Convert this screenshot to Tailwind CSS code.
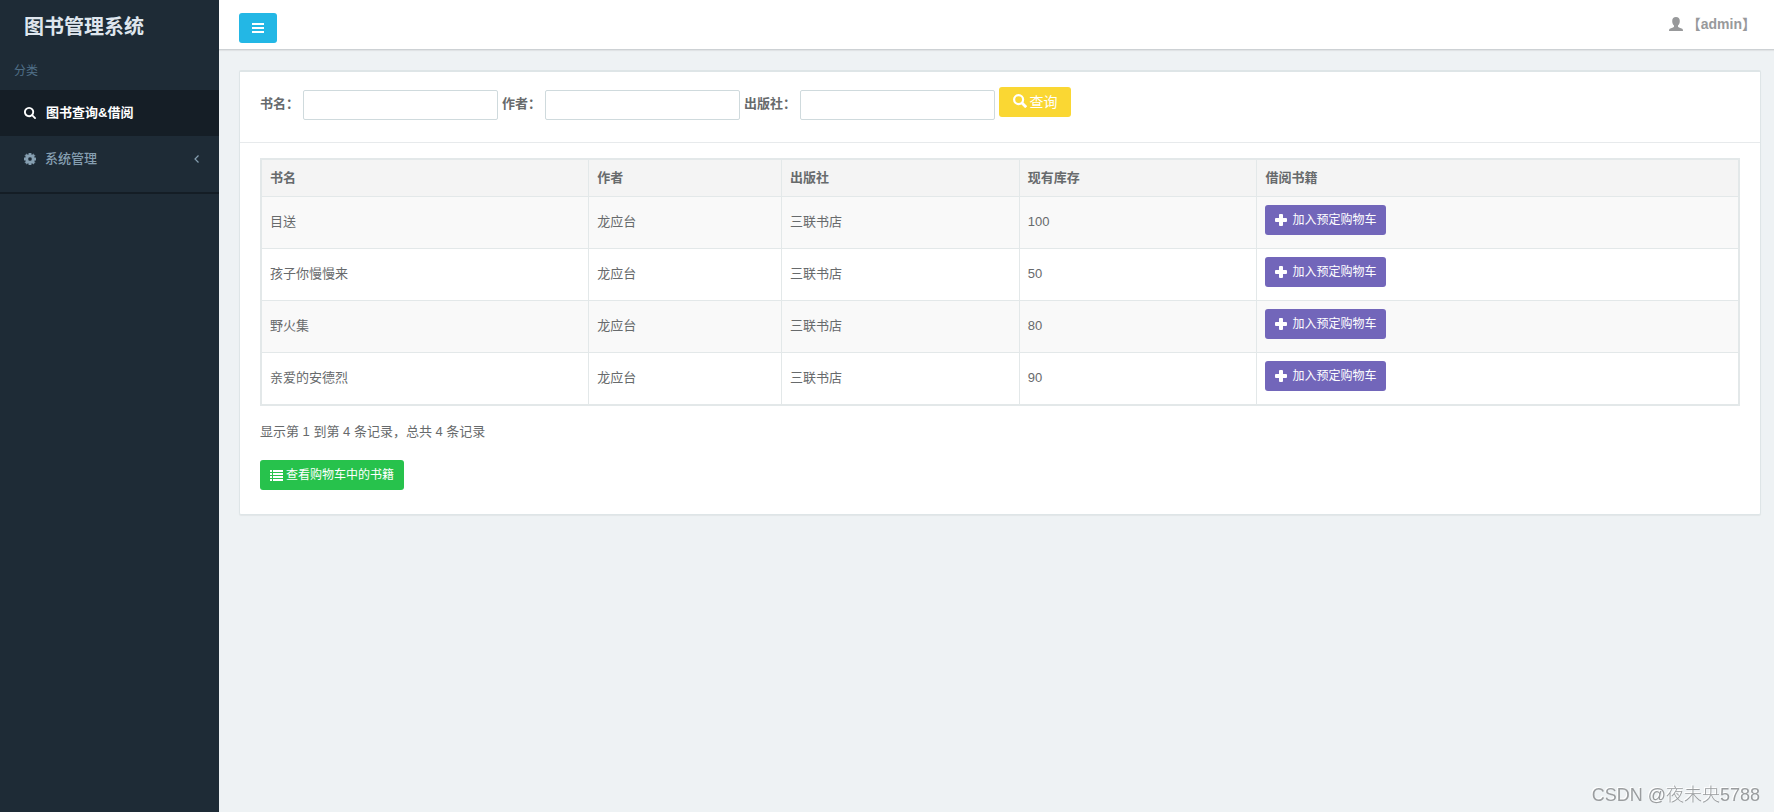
<!DOCTYPE html>
<html lang="zh-CN">
<head>
<meta charset="utf-8">
<meta name="viewport" content="width=device-width, initial-scale=1">
<title>图书管理系统</title>
<script src="https://cdn.jsdelivr.net/npm/@tailwindcss/browser@4"></script>
</head>
<body class="flex min-h-screen bg-[#eef2f4] font-['Liberation_Sans','Noto_Sans_CJK_SC',sans-serif] text-[13px] leading-5 text-[#676a6c]">
<svg class="hidden" aria-hidden="true">
  <symbol id="plus" viewBox="0 0 12 12"><path d="M4.900 0h2.200q.9 0 .9.9V4h3.100q.9 0 .9.9v2.200q0 .9-.9.9H8v3.100q0 .9-.9.9H4.900q-.9 0-.9-.9V8H.9Q0 8 0 7.100V4.900Q0 4 .9 4H4V.9Q4 0 4.900 0z"/></symbol>
</svg>

<aside class="w-[219px] shrink-0 bg-[#1e2b36]">
  <h1 class="px-6 pt-[13px] text-xl leading-7 font-bold text-[#dfe6ee]">图书管理系统</h1>
  <nav class="border-b-2 border-[#141d25] pt-5 pb-5">
    <p class="px-[14px] pb-[9px] text-xs leading-5 text-[#506f87]">分类</p>
    <a href="#" class="flex h-[46px] items-center gap-[10px] bg-[#151e26] px-6 pb-px font-bold text-white">
      <svg class="size-3" viewBox="0 0 1664 1664" fill="currentColor"><path d="M1152 704q0-185-131.500-316.500t-316.500-131.500-316.500 131.500-131.500 316.500 131.500 316.500 316.500 131.500 316.500-131.500 131.500-316.500zm512 832q0 52-38 90t-90 38q-54 0-90-38l-343-342q-179 124-399 124-143 0-273.500-55.500t-225-150-150-225-55.500-273.500 55.500-273.500 150-225 225-150 273.500-55.500 273.500 55.500 225 150 150 225 55.500 273.500q0 220-124 399l343 343q37 37 37 90z"/></svg>
      <span>图书查询&amp;借阅</span>
    </a>
    <a href="#" class="-mb-[10px] flex h-[46px] items-center gap-[9px] px-6 pb-px font-medium text-[#869fb1]">
      <svg class="size-3" viewBox="128 128 1536 1536" fill="currentColor" stroke="currentColor" stroke-width="60"><path d="M1152 896q0-106-75-181t-181-75-181 75-75 181 75 181 181 75 181-75 75-181zm512-109v222q0 12-8 23t-20 13l-185 28q-19 54-39 91 35 50 107 138 10 12 10 25t-9 23q-27 37-99 108t-94 71q-12 0-26-9l-138-108q-44 23-91 38-16 136-29 186-7 28-36 28h-222q-14 0-24.500-8.500t-11.500-21.500l-28-184q-49-16-90-37l-141 107q-10 9-25 9-14 0-25-11-126-114-165-168-7-10-7-23 0-12 8-23 15-21 51-66.500t54-70.500q-27-50-41-99l-183-27q-13-2-21-12.500t-8-23.500v-222q0-12 8-23t19-13l186-28q14-46 39-92-40-57-107-138-10-12-10-24 0-10 9-23 26-36 98.500-107.500t94.500-71.500q13 0 26 10l138 107q44-23 91-38 16-136 29-186 7-28 36-28h222q14 0 24.500 8.500t11.500 21.500l28 184q49 16 90 37l142-107q9-9 24-9 13 0 25 10 129 119 165 170 7 8 7 22 0 12-8 23-15 21-51 66.500t-54 70.500q26 50 41 98l183 28q13 2 21 12.500t8 23.500z"/></svg>
      <span>系统管理</span>
      <svg class="-mr-1 ml-auto h-2 w-[5px]" viewBox="0 0 5 8" fill="none" stroke="currentColor" stroke-width="1.200"><path d="M4.500.5 1 4l3.500 3.500"/></svg>
    </a>
  </nav>
</aside>

<div class="min-w-0 grow">
  <header class="flex h-[50px] items-start justify-between border-b border-[#cdd1d4] bg-white pr-[18px] pl-5 shadow-[0_1px_1px_rgba(0,0,0,0.060)]">
    <button type="button" aria-label="菜单" class="mt-[13px] flex h-[30px] w-[38px] items-center justify-center rounded-[3px] bg-[#23b7e5] text-white">
      <svg class="h-[10px] w-3" viewBox="0 0 12 10" fill="currentColor"><path d="M0 0h12v2H0zM0 4h12v2H0zM0 8h12v2H0z"/></svg>
    </button>
    <a href="#" class="mt-[14px] flex items-center gap-1 text-sm leading-5 font-bold text-[#98999b]">
      <svg class="h-[14px] w-[14px]" viewBox="0 0 14 14" fill="currentColor"><path d="M7 0C4.600 0 3.200 1.500 3.200 3.900c0 2 .7 3.700 1.800 4.700v1.100c-.2.500-.8.700-1.600 1L1.400 11.500C.4 11.900 0 12.600 0 14h14c0-1.400-.4-2.100-1.400-2.500l-2-.8c-.8-.3-1.400-.5-1.600-1V8.600c1.100-1 1.800-2.700 1.800-4.700C10.800 1.500 9.400 0 7 0z"/></svg>
      <span>【admin】</span>
    </a>
  </header>

  <main class="pt-5 pr-[13px] pl-5">
    <section class="rounded-[2px] border border-t-2 border-[#dee5e7] bg-white shadow-[0_1px_1px_rgba(0,0,0,0.050)]">
      <form class="flex items-start gap-1 border-b border-[#e7eaec] px-5 pt-[15px] pb-[22px]">
        <label for="name" class="mt-[7px] font-bold">书名：</label>
        <input id="name" type="text" class="mt-[3px] h-[30px] w-[195px] rounded-[2px] border border-[#cfdadd] bg-white px-2">
        <label for="author" class="mt-[7px] font-bold">作者：</label>
        <input id="author" type="text" class="mt-[3px] h-[30px] w-[195px] rounded-[2px] border border-[#cfdadd] bg-white px-2">
        <label for="press" class="mt-[7px] font-bold">出版社：</label>
        <input id="press" type="text" class="mt-[3px] h-[30px] w-[195px] rounded-[2px] border border-[#cfdadd] bg-white px-2">
        <button type="button" class="flex h-[30px] w-[72px] items-center justify-center gap-[3px] rounded-[3px] bg-[#fad733] text-sm text-white">
          <svg class="mb-[2px] size-[14px]" viewBox="0 0 14 14" fill="none" stroke="currentColor"><circle cx="5.600" cy="5.600" r="4.500" stroke-width="2.200"/><path d="m9 9 4.200 4.200" stroke-width="2.800"/></svg>
          <span>查询</span>
        </button>
      </form>

      <div class="px-5 pt-[15px] pb-6">
        <div class="border border-[#e3e8e9]">
          <table class="w-full table-fixed border-collapse border border-[#e3e8e9] text-left [&_td]:border [&_td]:border-[#e3e8e9] [&_td]:px-2 [&_td]:pt-2 [&_td]:pb-[10px] [&_th]:border [&_th]:border-[#e3e8e9] [&_th]:px-2">
            <colgroup><col class="w-[22.150%]"><col class="w-[13.050%]"><col class="w-[16.100%]"><col class="w-[16.100%]"><col></colgroup>
            <thead><tr class="h-[37px] bg-[#f4f4f4]"><th scope="col">书名</th><th scope="col">作者</th><th scope="col">出版社</th><th scope="col">现有库存</th><th scope="col">借阅书籍</th></tr></thead>
            <tbody>
              <tr class="h-[52px] bg-[#f9f9f9]"><td>目送</td><td>龙应台</td><td>三联书店</td><td>100</td><td class="align-top"><button type="button" class="flex h-[30px] items-center gap-[5px] rounded-[3px] bg-[#7266ba] px-[10px] text-xs text-white"><svg class="size-3" fill="currentColor"><use href="#plus"/></svg>加入预定购物车</button></td></tr>
              <tr class="h-[52px]"><td>孩子你慢慢来</td><td>龙应台</td><td>三联书店</td><td>50</td><td class="align-top"><button type="button" class="flex h-[30px] items-center gap-[5px] rounded-[3px] bg-[#7266ba] px-[10px] text-xs text-white"><svg class="size-3" fill="currentColor"><use href="#plus"/></svg>加入预定购物车</button></td></tr>
              <tr class="h-[52px] bg-[#f9f9f9]"><td>野火集</td><td>龙应台</td><td>三联书店</td><td>80</td><td class="align-top"><button type="button" class="flex h-[30px] items-center gap-[5px] rounded-[3px] bg-[#7266ba] px-[10px] text-xs text-white"><svg class="size-3" fill="currentColor"><use href="#plus"/></svg>加入预定购物车</button></td></tr>
              <tr class="h-[52px]"><td>亲爱的安德烈</td><td>龙应台</td><td>三联书店</td><td>90</td><td class="align-top"><button type="button" class="flex h-[30px] items-center gap-[5px] rounded-[3px] bg-[#7266ba] px-[10px] text-xs text-white"><svg class="size-3" fill="currentColor"><use href="#plus"/></svg>加入预定购物车</button></td></tr>
            </tbody>
          </table>
        </div>
        <p class="mt-4 mb-[18px]">显示第 1 到第 4 条记录，总共 4 条记录</p>
        <button type="button" class="flex h-[30px] items-center gap-[3px] rounded-[3px] bg-[#27c24c] px-[10px] text-xs text-white">
          <svg class="h-[11px] w-[13px]" viewBox="0 0 13 11" fill="currentColor"><path d="M0 0h2v2H0zM3 0h10v2H3zM0 3h2v2H0zM3 3h10v2H3zM0 6h2v2H0zM3 6h10v2H3zM0 9h2v2H0zM3 9h10v2H3z"/></svg>
          查看购物车中的书籍
        </button>
      </div>
    </section>
  </main>
</div>

<p class="fixed right-[14px] bottom-[5px] text-lg leading-6 font-light text-[#9a9d9f] [text-shadow:-1px_-1px_0_#ffffff]">CSDN @夜未央5788</p>
</body>
</html>
